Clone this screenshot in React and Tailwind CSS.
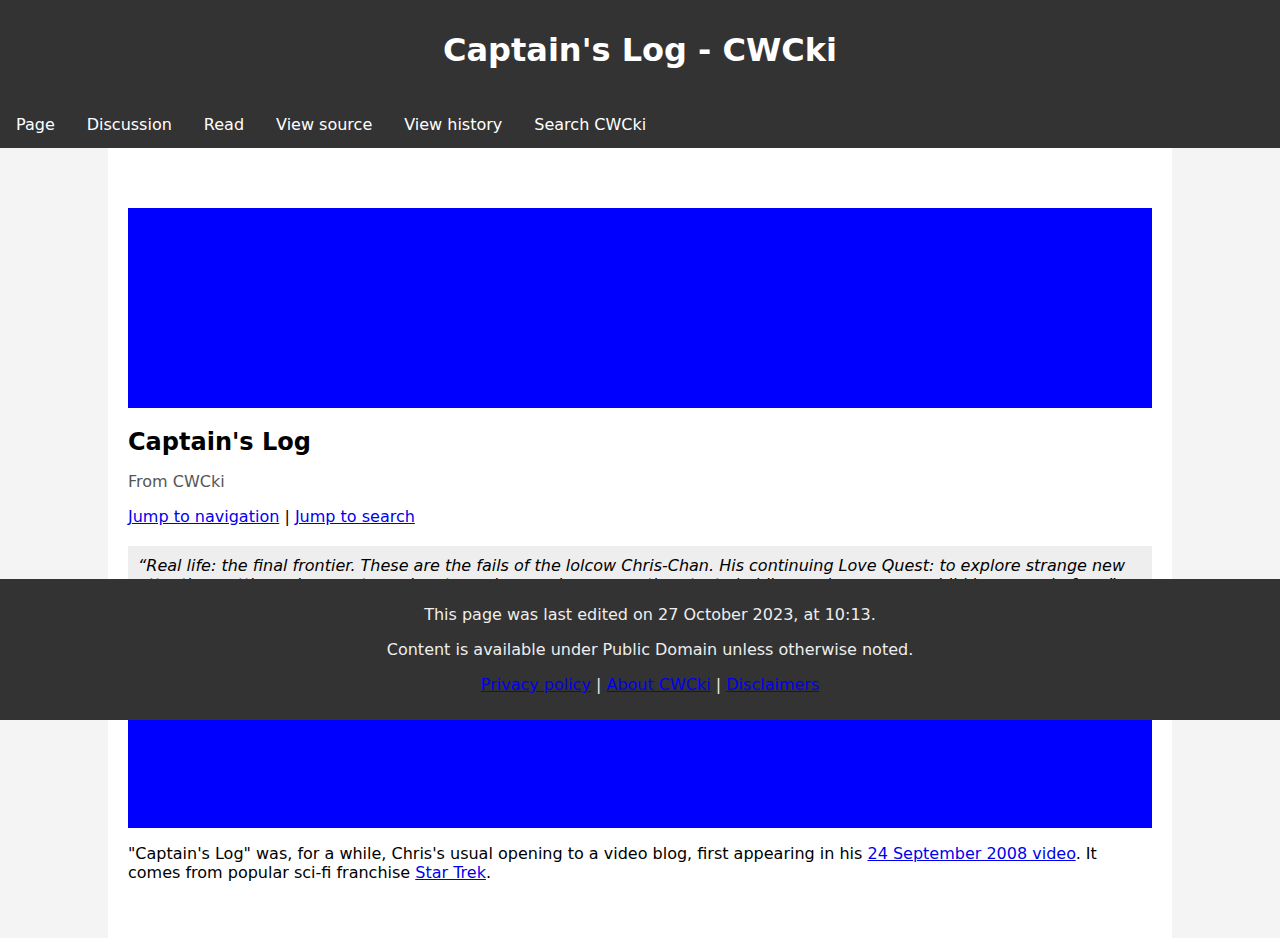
import React from 'react'

const navItems = ['Page', 'Discussion', 'Read', 'View source', 'View history', 'Search CWCki'];

const A = ({ children }) => (
  <a href="#" className="text-[#0000ee] underline">{children}</a>
);

const App = () => {
  return (
    <div className="min-h-screen bg-[#f4f4f4] text-base leading-normal text-black" style={{ fontFamily: '"DejaVu Sans", "Liberation Sans", sans-serif' }}>
      <header className="bg-[#333333] text-white">
        <div className="h-[100px] flex items-center justify-center">
          <h1 className="text-[32px] font-bold">Captain's Log - CWCki</h1>
        </div>
        <nav className="flex h-12 items-center pt-[2px]">
          {navItems.map((item) => (
            <a key={item} href="#" className="px-4 text-white">{item}</a>
          ))}
        </nav>
      </header>

      <main className="mx-auto w-[1064px] bg-white px-5 pt-[60px] pb-[60px] min-h-[790px]">
        <div className="h-[200px] bg-[#0000ff]"></div>
        <h2 className="mt-5 text-2xl font-bold leading-[normal]">Captain's Log</h2>
        <p className="mt-4 text-[#555555] leading-[normal]">From CWCki</p>
        <p className="mt-4 leading-[normal]">
          <A>Jump to navigation</A> | <A>Jump to search</A>
        </p>
        <div className="mt-5 bg-[#eeeeee] p-[10px] italic leading-[normal]">
          “Real life: the final frontier. These are the fails of the lolcow Chris-Chan. His continuing Love Quest: to explore strange new
          attention-getting schemes, to seek out new love and new sweethearts, to boldly go where no manchild has gone before.”
        </div>
        <div className="mt-4 h-[208px] bg-[#0000ff]"></div>
        <p className="mt-4 leading-[normal]">
          "Captain's Log" was, for a while, Chris's usual opening to a video blog, first appearing in his <A>24 September 2008 video</A>. It
          comes from popular sci-fi franchise <A>Star Trek</A>.
        </p>
      </main>

      {/* footer sits on top of the article */}
      <footer className="fixed left-0 top-[579px] box-content w-full bg-[#333333] px-[10px] py-[10px] text-center text-[#eeeeee] leading-[normal]">
        <p className="my-4">This page was last edited on 27 October 2023, at 10:13.</p>
        <p className="my-4">Content is available under Public Domain unless otherwise noted.</p>
        <p className="my-4">
          <A>Privacy policy</A> | <A>About CWCki</A> | <A>Disclaimers</A>
        </p>
      </footer>
    </div>
  );
};

export default App
